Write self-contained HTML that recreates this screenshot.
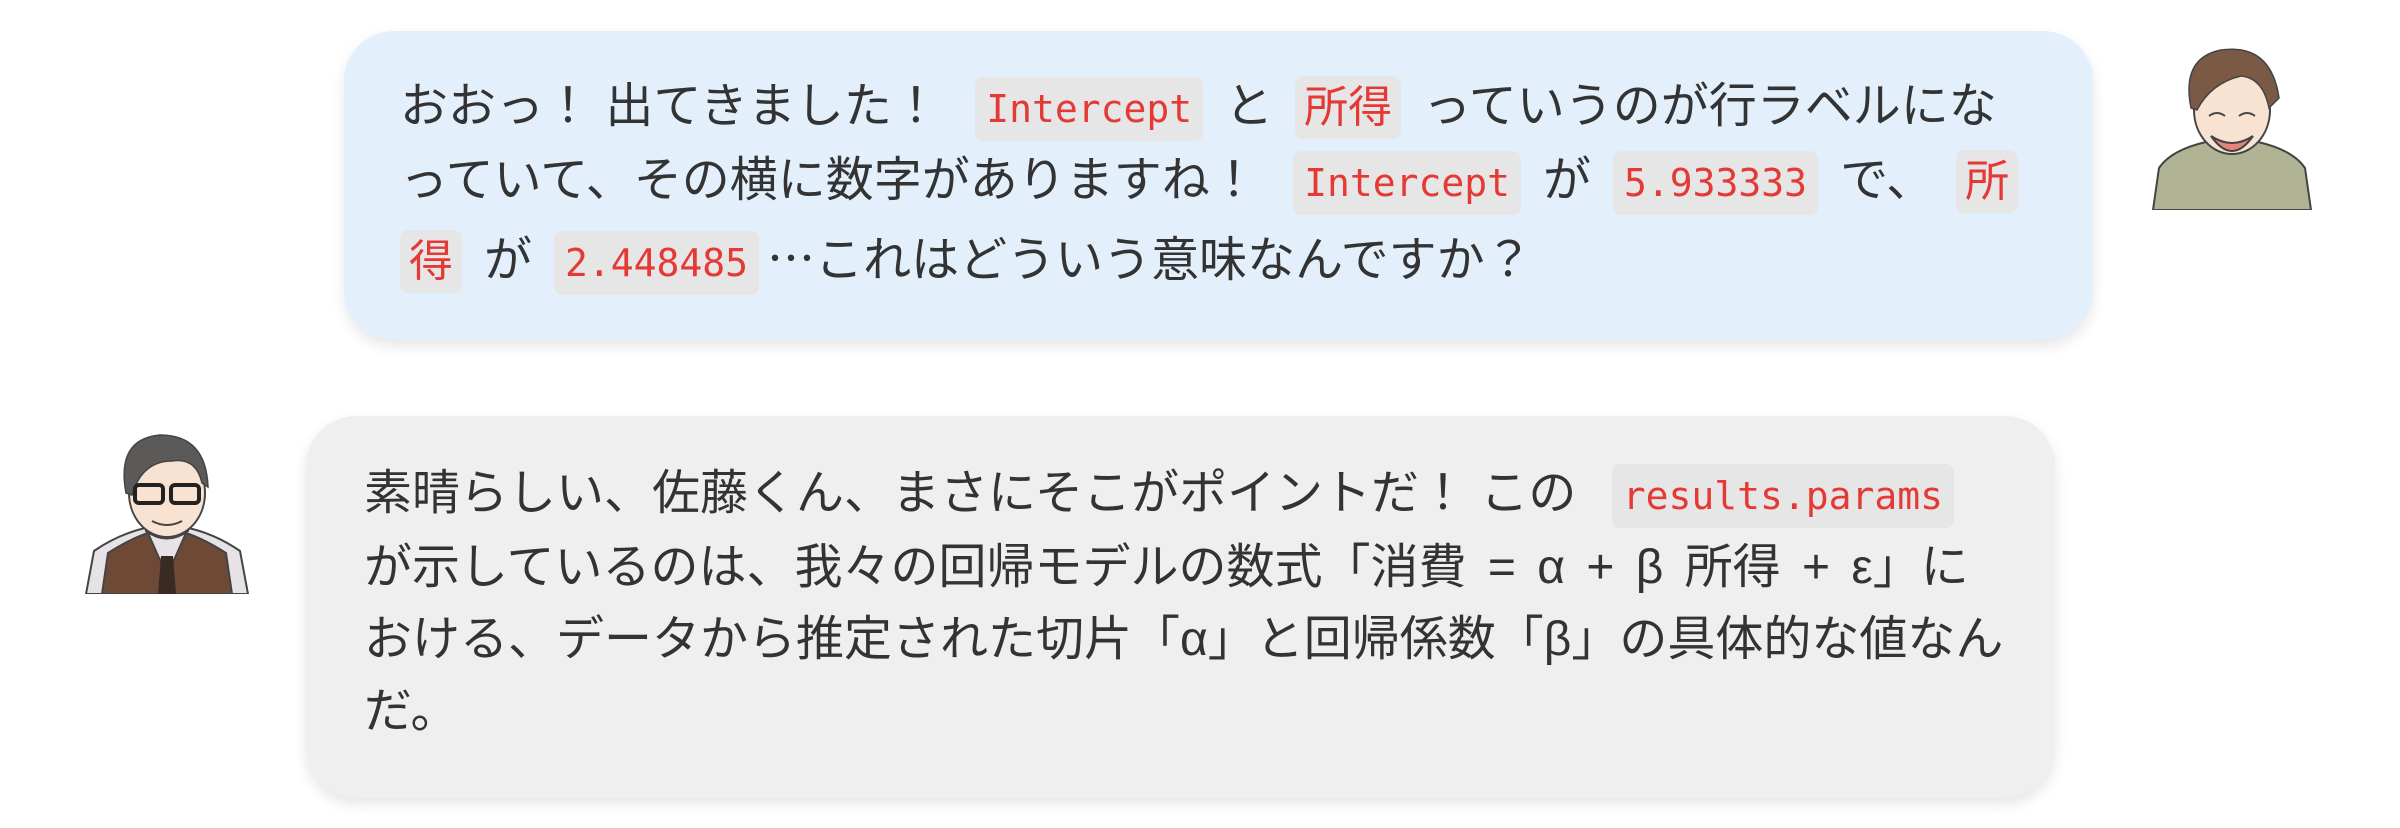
<!DOCTYPE html>
<html><head><meta charset="utf-8"><style>
body{margin:0;width:2400px;height:828px;background:#fff;overflow:hidden;position:relative;font-family:"Liberation Sans","Noto Sans CJK JP",sans-serif;color:#333;}
.b{position:absolute;border-radius:50px;box-shadow:0 6px 14px rgba(0,0,0,0.10);font-size:48px;line-height:72px;white-space:nowrap;}
.b1{left:344px;top:31px;width:1749px;height:309px;background:#e3f0fb;box-sizing:border-box;padding:40px 0 0 56px;}
.b2{left:306px;top:416px;width:1749px;height:382px;background:#efefef;box-sizing:border-box;padding:42px 0 0 58px;}
code{font-family:"DejaVu Sans Mono","Noto Sans CJK JP",monospace;font-size:38px;color:#e53935;background:#e6e6e6;border-radius:8px;padding:10px 11px;margin:0 22px;}
code.j{font-size:44px;padding:6px 9px;}
.el{font-family:"Noto Sans CJK JP",sans-serif;}
.av{position:absolute;}
</style></head><body>
<div class="b b1">おおっ！ 出てきました！ <code>Intercept</code>と<code class="j">所得</code>っていうのが行ラベルにな<br>っていて、その横に数字がありますね！ <code>Intercept</code>が<code>5.933333</code>で、<code class="j" style="margin-right:0">所</code><br><code class="j" style="margin-left:0">得</code>が<code style="margin-right:8px">2.448485</code><span class="el">…</span>これはどういう意味なんですか？</div>
<div class="b b2">素晴らしい、佐藤くん、まさにそこがポイントだ！ この <code>results.params</code><br><span style="word-spacing:8px">が示しているのは、我々の回帰モデルの数式「消費 = α + β 所得 + ε」に</span><br>おける、データから推定された切片「α」と回帰係数「β」の具体的な値なん<br>だ。</div>
<svg class="av" style="left:2151px;top:38px" width="162" height="172" viewBox="0 0 162 172">
<path d="M2 172 L8 130 Q20 112 55 104 L107 104 Q142 112 154 130 L160 172Z" fill="#b0b494" stroke="#444" stroke-width="2"/>
<path d="M62 80 L62 108 Q81 122 100 108 L100 80Z" fill="#f5dccb" stroke="#444" stroke-width="2"/>
<ellipse cx="81" cy="72" rx="38" ry="44" fill="#f8e3d3" stroke="#444" stroke-width="2"/>
<path d="M40 70 Q30 20 70 12 Q120 5 128 60 L118 70 Q112 40 90 38 Q60 45 46 72Z" fill="#7a5a44" stroke="#444" stroke-width="1.5"/>
<path d="M60 98 Q81 112 102 98 Q81 128 60 98Z" fill="#e8837a" stroke="#444" stroke-width="2"/>
<path d="M58 78 Q66 72 74 78 M88 78 Q96 72 104 78" stroke="#444" stroke-width="2" fill="none"/>
</svg>
<svg class="av" style="left:80px;top:421px" width="174" height="173" viewBox="0 0 174 173">
<path d="M6 173 L14 130 Q40 112 70 106 L104 106 Q134 112 160 130 L168 173Z" fill="#e6e2e6" stroke="#444" stroke-width="2"/>
<path d="M22 173 L28 132 Q50 118 68 112 L87 155 L106 112 Q124 118 146 132 L152 173Z" fill="#6e4a36" stroke="#444" stroke-width="2"/>
<path d="M81 135 L93 135 L96 173 L78 173Z" fill="#3b2a22"/>
<path d="M66 80 L66 110 Q87 125 108 110 L108 80Z" fill="#f5dccb" stroke="#444" stroke-width="2"/>
<ellipse cx="87" cy="72" rx="38" ry="44" fill="#f8e3d3" stroke="#444" stroke-width="2"/>
<path d="M46 72 Q36 18 80 14 Q126 14 128 66 L122 62 Q116 36 92 40 Q62 40 52 74Z" fill="#5c5a58" stroke="#444" stroke-width="1.5"/>
<rect x="55" y="64" width="28" height="18" rx="4" fill="none" stroke="#222" stroke-width="4"/>
<rect x="91" y="64" width="28" height="18" rx="4" fill="none" stroke="#222" stroke-width="4"/>
<path d="M72 100 Q87 108 102 100" stroke="#444" stroke-width="2" fill="none"/>
</svg>
</body></html>
